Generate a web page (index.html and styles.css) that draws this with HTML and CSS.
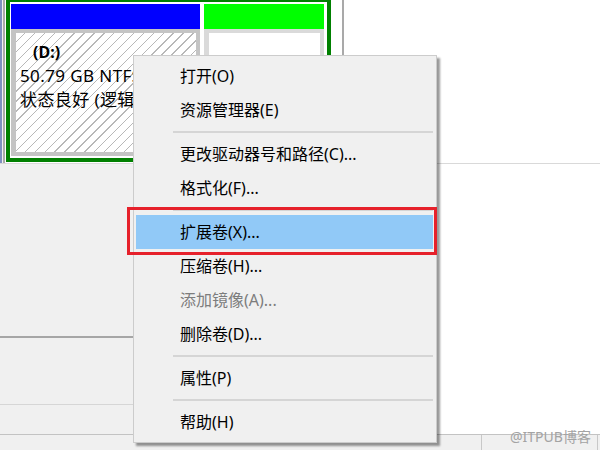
FILE: index.html
```html
<!DOCTYPE html>
<html lang="zh-CN">
<head>
  <meta charset="UTF-8" />
  <title>磁盘管理</title>
  <link rel="stylesheet" href="styles.css">
</head>
<body>
  <div class="screen">
    <div class="disk-row">
      <div class="stub"></div>
      <div class="extended">
        <div class="part part-d">
          <div class="part-head head-blue"></div>
          <div class="part-body hatched">
            <div class="vol-name">(D:)</div>
            <div class="vol-line">50.79 GB NTFS</div>
            <div class="vol-line">状态良好 (逻辑驱动器)</div>
          </div>
        </div>
        <div class="part part-free">
          <div class="part-head head-green"></div>
          <div class="part-body plain"></div>
        </div>
      </div>
      <div class="disk-rest"></div>
    </div>

    <div class="lower">
      <div class="pane">
        <div class="pane-left">
          <div class="pane-row tall"></div>
          <div class="pane-row mid"></div>
          <div class="pane-row short"></div>
        </div>
        <div class="pane-right"></div>
      </div>
      <div class="statusbar">
        <span class="status-cell wide"></span>
        <span class="status-cell"></span>
      </div>
    </div>

    <ul class="context-menu">
      <li class="menu-item">打开(O)</li>
      <li class="menu-item">资源管理器(E)</li>
      <li class="menu-sep"></li>
      <li class="menu-item">更改驱动器号和路径(C)...</li>
      <li class="menu-item">格式化(F)...</li>
      <li class="menu-sep"></li>
      <li class="menu-item active">扩展卷(X)...</li>
      <li class="menu-item">压缩卷(H)...</li>
      <li class="menu-item disabled">添加镜像(A)...</li>
      <li class="menu-item">删除卷(D)...</li>
      <li class="menu-sep"></li>
      <li class="menu-item">属性(P)</li>
      <li class="menu-sep"></li>
      <li class="menu-item">帮助(H)</li>
    </ul>

    <!-- red annotation around the highlighted entry -->
    <div class="callout"></div>
    <div class="watermark">@ITPUB博客</div>
  </div>
</body>
</html>
```

FILE: styles.css
```css
:root {
  --menu-bg: #f0f0f0;
  --panel-bg: #f0f0f0;
  --vol-green: #008000;
  --hl-blue: #91c9f7;
  --note-red: #e6212b;
}
html, body {
  margin: 0;
  padding: 0;
}
body {
  width: 600px;
  height: 450px;
  overflow: hidden;
  background: #fff;
  font-family: "Noto Sans", "Noto Sans CJK SC", sans-serif;
  font-size: 16px;
  color: #000;
}
.screen {
  position: relative;
  width: 600px;
  height: 450px;
  overflow: hidden;
}

/* disk graphic */
.disk-row {
  display: flex;
  align-items: flex-start;
  height: 163px;
  background: #fff;
}
.stub {
  width: 6px;
  height: 163px;
  background: linear-gradient(to right, #8090c0 0 2px, #f0f0f0 2px 3px, #a9a9a9 3px 5px, #fff 5px);
}
.extended {
  display: flex;
  gap: 4px;
  margin-top: -2px;
  width: 325px;
  height: 164px;
  box-sizing: border-box;
  border: 4px solid var(--vol-green);
  padding: 2px 3px 2px 1px;
  background: #fff;
}
.part {
  display: flex;
  flex-direction: column;
}
.part-d { width: 189px; }
.part-free { width: 120px; }
.part-head {
  height: 25px;
  flex: none;
}
.head-blue { background: #0000ff; }
.head-green { background: #00ff00; }
.part-body {
  flex: 1;
  box-sizing: border-box;
}
.hatched {
  border: 4px solid #c4c4c4;
  border-left-width: 5px;
  background-color: #fff;
  background-image: repeating-linear-gradient(135deg, #fff 0 6px, #b8b8b8 6px 7px);
  font-size: 17px;
  line-height: 24px;
  white-space: nowrap;
  overflow: hidden;
}
.plain {
  border: 4px solid #dadada;
  border-left-width: 5px;
  background: #fff;
}
.vol-name {
  margin-top: 7px;
  padding-left: 17px;
  font-size: 16px;
  font-weight: bold;
}
.vol-line {
  padding-left: 4px;
  letter-spacing: 0.4px;
}
.disk-rest {
  flex: 1;
  height: 163px;
  margin-left: 11px;
  border-left: 2px solid #a9a9a9;
}

/* panels below the disk */
.lower {
  border-top: 1px solid #d9d9d9;
}
.pane {
  display: flex;
  height: 270px;
}
.pane-left {
  width: 300px;
  display: flex;
  flex-direction: column;
  background: var(--panel-bg);
}
.pane-row.tall {
  height: 172px;
  border-bottom: 2px solid #a6a6a6;
}
.pane-row.mid {
  height: 66px;
  border-bottom: 1px solid #d6d6d6;
}
.pane-row.short {
  flex: 1;
}
.pane-right {
  flex: 1;
  background: #fff;
}
.statusbar {
  display: flex;
  height: 16px;
  border-top: 1px solid #c3c3c3;
  background: var(--panel-bg);
}
.status-cell {
  width: 115px;
  border-right: 1px solid #c8c8c8;
}
.status-cell.wide {
  width: 481px;
}

/* context menu */
.context-menu {
  position: absolute;
  left: 133px;
  top: 55px;
  width: 304px;
  height: 388px;
  box-sizing: border-box;
  margin: 0;
  padding: 3px 3px 3px 2px;
  list-style: none;
  background: var(--menu-bg);
  border: 1px solid #cccccc;
  box-shadow: 3px 3px 2px rgba(0, 0, 0, 0.4);
}
.menu-item {
  height: 34px;
  line-height: 34px;
  padding-left: 44px;
  white-space: nowrap;
}
.menu-item.active {
  background: var(--hl-blue);
}
.menu-item.disabled {
  color: #7d7d7d;
}
.menu-sep {
  height: 2px;
  margin: 4px 0 4px 37px;
  background: #d5d5d5;
}

.callout {
  position: absolute;
  left: 127px;
  top: 207px;
  width: 310px;
  height: 48px;
  box-sizing: border-box;
  border: 3px solid var(--note-red);
}
.watermark {
  position: absolute;
  left: 510px;
  top: 427px;
  font-size: 14px;
  line-height: 20px;
  color: #a3a3a3;
}
```
